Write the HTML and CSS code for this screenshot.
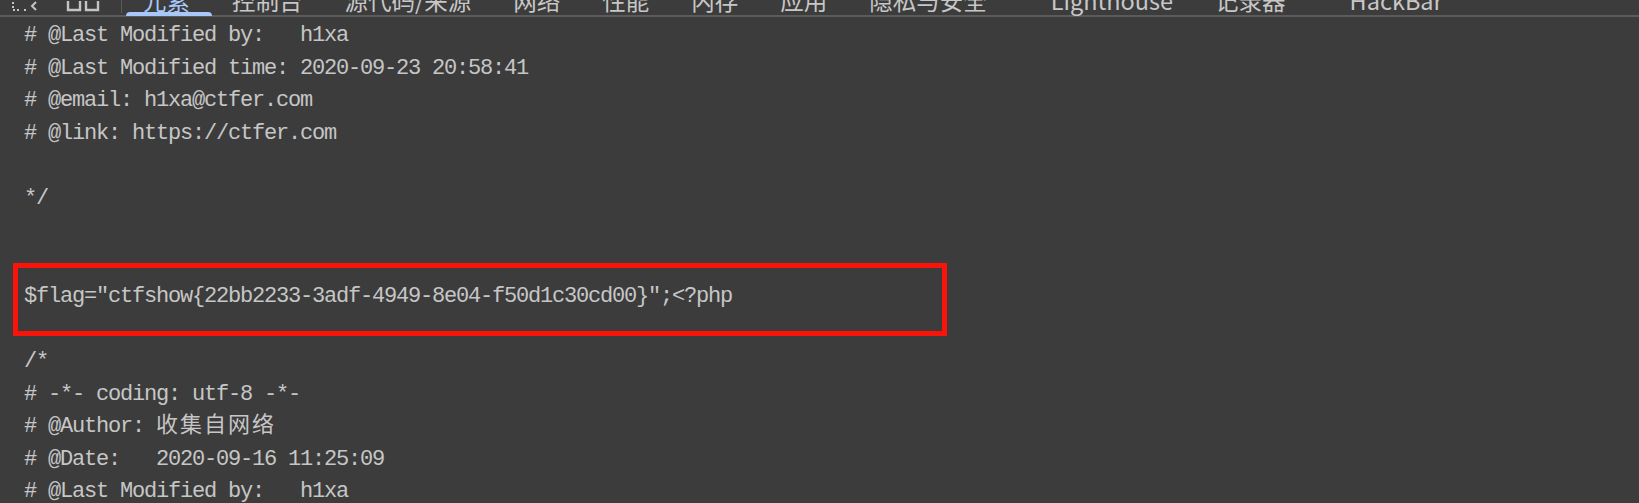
FILE: index.html
```html
<!DOCTYPE html>
<html>
<head>
    <title>view-source</title>
    <link rel="stylesheet" href="styles.css">
</head>
<body>
    <div class="toolbar">
        <div class="tools">
            <svg class="tool-icon" width="36" height="13" viewBox="0 0 36 13">
                <path d="M3 2v8h8M14 10h3" fill="none" stroke="#c4c4c4" stroke-width="2" stroke-dasharray="2 2"/>
                <path d="M26 2l-4 4 4 4" fill="none" stroke="#c4c4c4" stroke-width="2"/>
            </svg>
            <svg class="tool-icon" width="36" height="13" viewBox="0 0 36 13">
                <path d="M2 1v9h12V1M20 1v9h12V1" fill="none" stroke="#c4c4c4" stroke-width="2.4"/>
            </svg>
        </div>
        <div class="divider"></div>
        <div class="tabs">
            <span class="tab active">元素</span>
            <span class="tab">控制台</span>
            <span class="tab">源代码/来源</span>
            <span class="tab">网络</span>
            <span class="tab">性能</span>
            <span class="tab">内存</span>
            <span class="tab">应用</span>
            <span class="tab">隐私与安全</span>
            <span class="tab wide">Lighthouse</span>
            <span class="tab">记录器</span>
            <span class="tab wide">HackBar</span>
        </div>
    </div>

    <!-- 源代码 -->
    <div class="source">
        <div class="line"># @Last Modified by:   h1xa</div>
        <div class="line"># @Last Modified time: 2020-09-23 20:58:41</div>
        <div class="line"># @email: h1xa@ctfer.com</div>
        <div class="line"># @link: https://ctfer.com</div>
        <div class="line"></div>
        <div class="line">*/</div>
        <div class="line"></div>
        <div class="line"></div>
        <div class="line flag">$flag="ctfshow{22bb2233-3adf-4949-8e04-f50d1c30cd00}";&lt;?php</div>
        <div class="line"></div>
        <div class="line">/*</div>
        <div class="line"># -*- coding: utf-8 -*-</div>
        <div class="line"># @Author: <span class="cjk">收集自网络</span></div>
        <div class="line"># @Date:   2020-09-16 11:25:09</div>
        <div class="line"># @Last Modified by:   h1xa</div>
    </div>
</body>
</html>
```

FILE: styles.css
```css
body {
    margin: 0;
    background-color: #3c3c3c;
    overflow: hidden;
}
.toolbar {
    display: flex;
    height: 15px;
    border-bottom: 2px solid #5b5b5b;
    background-color: #3c3c3c;
}
.tools {
    display: flex;
    width: 121px;
    padding-left: 10px;
    gap: 20px;
    box-sizing: border-box;
}
.tool-icon {
    display: block;
}
.divider {
    width: 1px;
    height: 13px;
    background-color: #5b5b5b;
}
.tabs {
    display: flex;
}
.tab {
    position: relative;
    display: flex;
    align-items: flex-end;
    height: 15px;
    box-sizing: border-box;
    padding: 0 21px 3px;
    font-family: "Noto Sans CJK SC", "Noto Sans", sans-serif;
    font-size: 23.5px;
    line-height: 23.5px;
    color: #c7c7c7;
    white-space: nowrap;
}
.tab.wide {
    margin-left: 22px;
}
.tab.active {
    color: #a8c7fa;
}
.tab.active::after {
    content: "";
    position: absolute;
    left: 4px;
    right: -1px;
    bottom: -1px;
    height: 4px;
    border-radius: 4px 4px 0 0;
    background-color: #a8c7fa;
}
.source {
    padding: 3px 0 0 24px;
    font-family: "Liberation Mono", "Noto Sans CJK SC", monospace;
    font-size: 22px;
    letter-spacing: -1.2px;
    line-height: 32.6px;
    color: #c6c6c6;
}
.line {
    height: 32.6px;
    white-space: pre;
}
.flag {
    position: relative;
}
.flag::after {
    content: "";
    position: absolute;
    left: -11px;
    top: -18px;
    width: 934px;
    height: 73px;
    box-sizing: border-box;
    border: 5px solid #fb1309;
}
.cjk {
    font-family: "Noto Sans CJK SC", sans-serif;
    line-height: 1;
    letter-spacing: 2px;
}
```
